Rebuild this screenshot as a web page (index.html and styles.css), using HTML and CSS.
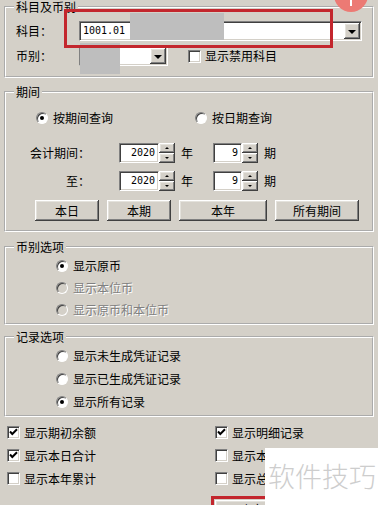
FILE: index.html
```html
<html>
    <head>
        <meta charset="UTF-8">
        <link rel="stylesheet" href="styles.css">
    </head>
    <body>
        <div class="dlg">
            <fieldset class="grp grp-subject">
                <legend>科目及币别</legend>
                <div class="grp-body">
                    <div class="row">
                        <span class="lbl">科目：</span>
                        <div class="combo combo-subject"><span class="val">1001.01</span><span class="drop"></span></div>
                    </div>
                    <div class="row">
                        <span class="lbl">币别：</span>
                        <div class="combo combo-cur"><span class="val"></span><span class="drop"></span></div>
                        <span class="opt opt-disabled-subj"><span class="chk"></span>显示禁用科目</span>
                    </div>
                </div>
            </fieldset>

            <fieldset class="grp grp-period">
                <legend>期间</legend>
                <div class="grp-body">
                    <div class="row mode-row">
                        <span class="opt mode"><span class="radio on"></span>按期间查询</span>
                        <span class="opt"><span class="radio"></span>按日期查询</span>
                    </div>
                    <div class="row period-row first">
                        <span class="plbl">会计期间：</span>
                        <span class="spin year"><span class="num">2020</span><span class="spin-btns"><span class="sb up"></span><span class="sb down"></span></span></span>
                        <span class="unit">年</span>
                        <span class="spin per"><span class="num">9</span><span class="spin-btns"><span class="sb up"></span><span class="sb down"></span></span></span>
                        <span class="unit">期</span>
                    </div>
                    <div class="row period-row">
                        <span class="plbl">至：</span>
                        <span class="spin year"><span class="num">2020</span><span class="spin-btns"><span class="sb up"></span><span class="sb down"></span></span></span>
                        <span class="unit">年</span>
                        <span class="spin per"><span class="num">9</span><span class="spin-btns"><span class="sb up"></span><span class="sb down"></span></span></span>
                        <span class="unit">期</span>
                    </div>
                    <div class="row btn-row">
                        <span class="btn w64">本日</span>
                        <span class="btn w64">本期</span>
                        <span class="btn w88">本年</span>
                        <span class="btn w84">所有期间</span>
                    </div>
                </div>
            </fieldset>

            <fieldset class="grp grp-cur">
                <legend>币别选项</legend>
                <div class="grp-body list">
                    <span class="opt"><span class="radio on"></span>显示原币</span>
                    <span class="opt off"><span class="radio"></span>显示本位币</span>
                    <span class="opt off"><span class="radio"></span>显示原币和本位币</span>
                </div>
            </fieldset>

            <fieldset class="grp grp-rec">
                <legend>记录选项</legend>
                <div class="grp-body list">
                    <span class="opt"><span class="radio white"></span>显示未生成凭证记录</span>
                    <span class="opt"><span class="radio white"></span>显示已生成凭证记录</span>
                    <span class="opt"><span class="radio on"></span>显示所有记录</span>
                </div>
            </fieldset>

            <div class="checks">
                <span class="opt"><span class="chk"><svg width="13" height="13" viewBox="0 0 13 13"><path d="M3 5.5 L5.3 8 L10 3.3" fill="none" stroke="#000" stroke-width="2"/></svg></span>显示期初余额</span>
                <span class="opt"><span class="chk"><svg width="13" height="13" viewBox="0 0 13 13"><path d="M3 5.5 L5.3 8 L10 3.3" fill="none" stroke="#000" stroke-width="2"/></svg></span>显示明细记录</span>
                <span class="opt"><span class="chk"><svg width="13" height="13" viewBox="0 0 13 13"><path d="M3 5.5 L5.3 8 L10 3.3" fill="none" stroke="#000" stroke-width="2"/></svg></span>显示本日合计</span>
                <span class="opt"><span class="chk"></span>显示本日发生额</span>
                <span class="opt"><span class="chk"></span>显示本年累计</span>
                <span class="opt"><span class="chk"></span>显示总账记录</span>
            </div>

            <div class="footer">
                <span class="ok-frame"><span class="btn ok">确定(O)</span></span>
            </div>

            <!-- marks drawn over the dialog -->
            <div class="mask mask-subject"></div>
            <div class="mask mask-cur"></div>
            <div class="hl hl-subject"></div>
            <div class="badge"><span class="badge-mark"></span></div>
            <div class="watermark">软件技巧</div>
        </div>
    </body>
</html>
```

FILE: styles.css
```css
html, body {
    margin: 0;
    height: 100%;
    overflow: hidden;
}
body {
    background: #d4d0c8;
    font-family: "Noto Sans CJK SC", sans-serif;
    font-size: 12px;
    line-height: 14px;
    color: #000;
}

.dlg {
    position: relative;
    padding: 0 4px;
}

/* group boxes */
.grp {
    margin: 0;
    padding: 0 0 0 10px;
    border: 2px groove #fff;
    min-width: 0;
}
.grp legend {
    padding: 0 2px;
    margin-left: -2px;
    line-height: 14px;
}
.grp-period { margin-top: 7px; }
.grp-cur { margin-top: 8px; }
.grp-rec { margin-top: 5px; }

.row {
    display: flex;
    align-items: center;
}

.grp-subject .grp-body {
    display: flex;
    flex-direction: column;
    gap: 5px;
    padding: 7px 0 10px 0;
}
.grp-subject .row { height: 20px; }
.lbl { width: 63px; }

/* sunken fields */
.combo, .spin .num {
    background: #fff;
    border: 1px solid;
    border-color: #808080 #fff #fff #808080;
    box-shadow: inset 1px 1px 0 #404040, inset -1px -1px 0 #d4d0c8;
    box-sizing: border-box;
}
.combo {
    display: flex;
    height: 20px;
    padding: 1px;
}
.combo-subject { width: 283px; }
.combo-cur { width: 89px; }
.combo .val {
    flex: 1;
    font-family: "DejaVu Sans Mono", monospace;
    font-size: 10px;
    line-height: 16px;
    padding-left: 2px;
}
.drop, .sb, .btn {
    background: #d4d0c8;
    box-shadow: inset -1px -1px 0 #404040, inset 1px 1px 0 #fff, inset -2px -2px 0 #808080, inset 2px 2px 0 #e4e2dc;
}
.drop {
    width: 16px;
    display: flex;
    align-items: center;
    justify-content: center;
}
.drop::after {
    content: "";
    border-top: 4px solid #000;
    border-left: 4px solid transparent;
    border-right: 4px solid transparent;
    margin-top: 1px;
}

.opt {
    display: flex;
    align-items: center;
}
.opt-disabled-subj { margin-left: 20px; }

.chk {
    width: 13px;
    height: 13px;
    box-sizing: border-box;
    background: #fff;
    border: 1px solid;
    border-color: #808080 #fff #fff #808080;
    box-shadow: inset 1px 1px 0 #404040, inset -1px -1px 0 #d4d0c8;
    margin-right: 4px;
    position: relative;
}
.chk svg {
    position: absolute;
    left: -1px;
    top: -1px;
}

.radio {
    width: 12px;
    height: 12px;
    box-sizing: border-box;
    border-radius: 50%;
    background: #d4d0c8;
    border: 1px solid;
    border-color: #808080 #fff #fff #808080;
    box-shadow: inset 1px 1px 0 #404040;
    margin-right: 5px;
    display: flex;
    align-items: center;
    justify-content: center;
}
.radio.on, .radio.white, .grp-period .radio { background: #fff; }
.radio.on::after {
    content: "";
    width: 4px;
    height: 4px;
    border-radius: 50%;
    background: #000;
}

/* period group */
.grp-period .grp-body { padding: 12px 0 9px 0; }
.mode-row {
    height: 14px;
    padding-left: 20px;
}
.mode { width: 159px; }
.period-row { height: 20px; margin-top: 8px; }
.period-row.first { margin-top: 18px; }
.plbl {
    width: 74px;
    text-align: right;
    margin-right: 29px;
}
.spin {
    display: flex;
    height: 20px;
}
.spin .num {
    height: 20px;
    font-family: "DejaVu Sans Mono", monospace;
    font-size: 10px;
    line-height: 18px;
    text-align: right;
    padding-right: 3px;
}
.year .num { width: 40px; }
.per .num { width: 29px; }
.spin-btns {
    display: flex;
    flex-direction: column;
    width: 16px;
}
.sb {
    height: 10px;
    display: flex;
    align-items: center;
    justify-content: center;
}
.sb.up::after, .sb.down::after {
    content: "";
    border-left: 2px solid transparent;
    border-right: 2px solid transparent;
}
.sb.up::after { border-bottom: 2px solid #000; }
.sb.down::after { border-top: 2px solid #000; }
.unit { margin-left: 6px; width: 12px; }
.year + .unit { margin-right: 20px; }

.btn-row {
    margin-top: 9px;
    padding-left: 19px;
    gap: 8px;
}
.btn {
    height: 21px;
    display: flex;
    align-items: center;
    justify-content: center;
    box-sizing: border-box;
}
.w64 { width: 64px; }
.w88 { width: 88px; }
.w84 { width: 84px; }

/* option lists */
.list {
    display: flex;
    flex-direction: column;
    padding-left: 40px;
}
.grp-cur .list { padding-top: 1px; padding-bottom: 2px; }
.grp-cur .opt { height: 22px; }
.grp-rec .list { padding-bottom: 2px; }
.grp-rec .opt { height: 23px; }
.opt.off {
    color: #808080;
    text-shadow: 1px 1px 0 #fff;
}

.checks {
    display: grid;
    grid-template-columns: 208px 1fr;
    grid-auto-rows: 23px;
    margin-top: 4px;
    padding-left: 3px;
}

.footer {
    margin-top: 6px;
    padding-left: 207px;
}
.ok-frame {
    display: inline-block;
    border: 3px solid #c3262d;
    padding: 1px;
}
.ok {
    width: 90px;
    height: 24px;
    align-items: flex-start;
    padding-top: 3px;
}

/* overlays */
.mask {
    position: absolute;
    background: #bebebe;
}
.mask-subject { left: 130px; top: 13px; width: 94px; height: 27px; }
.mask-cur { left: 80px; top: 43px; width: 40px; height: 31px; }
.hl {
    position: absolute;
    border: 3px solid #c3262d;
}
.hl-subject { left: 64px; top: 9px; width: 263px; height: 33px; }
.badge {
    position: absolute;
    left: 334px;
    top: -22px;
    width: 34px;
    height: 34px;
    border-radius: 50%;
    background: #ec7a74;
}
.badge-mark {
    position: absolute;
    left: 16px;
    top: 22px;
    width: 2px;
    height: 6px;
    background: #fff;
}
.watermark {
    position: absolute;
    left: 265px;
    top: 448px;
    right: 0;
    height: 60px;
    background: #fff;
    color: #cdcdcd;
    font-size: 27px;
    font-weight: 300;
    line-height: 27px;
    padding: 14px 0 0 3px;
    box-sizing: border-box;
    white-space: nowrap;
}
```
